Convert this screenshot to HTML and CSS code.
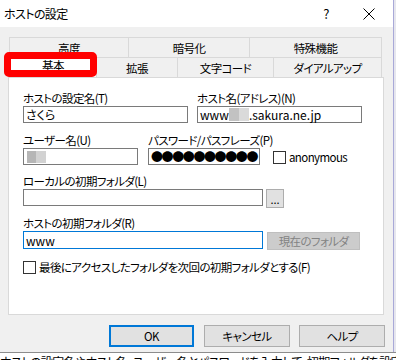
FILE: index.html
```html
<!DOCTYPE html>
<html lang="ja">
<head>
    <meta charset="UTF-8">
    <title>ホストの設定</title>
    <link rel="stylesheet" href="styles.css">
</head>
<body>
    <div class="screen">
        <div class="dialog">
            <div class="titlebar">
                <span class="title">ホストの設定</span>
                <span class="help">?</span>
                <svg class="close" width="12" height="12" viewBox="0 0 12 12">
                    <path d="M0.5 0.5 L11.5 11.5 M11.5 0.5 L0.5 11.5" stroke="#000" stroke-width="1" fill="none"/>
                </svg>
            </div>

            <div class="body">
                <div class="tabs">
                    <div class="tab-row">
                        <div class="tab t-kodo">高度</div>
                        <div class="tab t-ango">暗号化</div>
                        <div class="tab t-tokushu">特殊機能</div>
                    </div>
                    <div class="tab-row">
                        <div class="tab t-kihon selected">基本</div>
                        <div class="tab t-kakucho">拡張</div>
                        <div class="tab t-moji">文字コード</div>
                        <div class="tab t-dial">ダイアルアップ</div>
                    </div>
                </div>

                <div class="panel">
                    <div class="row">
                        <div class="field">
                            <div class="label">ホストの設定名(T)</div>
                            <div class="textbox w165">さくら</div>
                        </div>
                        <div class="field">
                            <div class="label">ホスト名(アドレス)(N)</div>
                            <div class="textbox w165">www<span class="blur b1"></span><span class="blur b2"></span>.sakura.ne.jp</div>
                        </div>
                    </div>

                    <div class="row row-user">
                        <div class="field w115">
                            <div class="label">ユーザー名(U)</div>
                            <div class="textbox w115"><span class="blur b3"></span><span class="blur b4"></span></div>
                        </div>
                        <div class="field pass w112">
                            <div class="label">パスワード/パスフレーズ(P)</div>
                            <div class="textbox w112 dots">●●●●●●●●●●</div>
                        </div>
                        <label class="check anon"><span class="box"></span>anonymous</label>
                    </div>

                    <div class="row row-local">
                        <div class="field">
                            <div class="label">ローカルの初期フォルダ(L)</div>
                            <div class="line">
                                <div class="textbox w240"></div>
                                <div class="button browse">...</div>
                            </div>
                        </div>
                    </div>

                    <div class="row">
                        <div class="field">
                            <div class="label">ホストの初期フォルダ(R)</div>
                            <div class="line">
                                <div class="textbox w240 focus">www</div>
                                <div class="button current">現在のフォルダ</div>
                            </div>
                        </div>
                    </div>

                    <label class="check last"><span class="box"></span>最後にアクセスしたフォルダを次回の初期フォルダとする(F)</label>
                </div>

                <div class="buttons">
                    <div class="button action ok">OK</div>
                    <div class="button action">キャンセル</div>
                    <div class="button action">ヘルプ</div>
                </div>
            </div>
        </div>
        <div class="side"></div>
    </div>
    <div class="under">ホストの設定名やホスト名、ユーザー名とパスワードを入力して、初期フォルダを設定します。</div>

    <div class="red-mark"></div>
</body>
</html>
```

FILE: styles.css
```css
body {
    margin: 0;
    width: 396px;
    height: 360px;
    overflow: hidden;
    background-color: #ffffff;
    font-family: "Noto Sans CJK JP", sans-serif;
    font-size: 11.5px;
    letter-spacing: -0.6px;
    font-feature-settings: "palt";
    color: #000;
    position: relative;
}
.screen {
    display: flex;
    height: 352px;
}
.dialog {
    width: 394px;
    height: 352px;
    box-sizing: border-box;
    background-color: #f0f0f0;
    border-right: 1px solid #a9a9d8;
}
.side {
    width: 2px;
    background-color: #e6e6ee;
}
.titlebar {
    height: 27px;
    background-color: #ffffff;
    display: flex;
    align-items: center;
}
.title {
    flex: 1;
    padding-left: 4px;
    line-height: 14px;
    font-size: 12px;
}
.help {
    width: 8px;
    text-align: center;
    margin-right: 33px;
    font-size: 13px;
}
.close {
    margin-right: 18px;
}
.body {
    padding: 10px 0 0 8px;
}
.tabs {
    margin-left: 1px;
}
.tab-row {
    display: flex;
}
.tab {
    height: 20px;
    line-height: 20px;
    box-sizing: border-box;
    text-align: center;
    border-top: 1px solid #d9d9d9;
    border-right: 1px solid #d9d9d9;
}
.tab:first-child {
    border-left: 1px solid #d9d9d9;
}
.tab.selected {
    background-color: #ffffff;
    line-height: 15px;
}
.t-kodo { width: 120px; }
.t-ango { width: 121px; }
.t-tokushu { width: 132px; }
.t-kihon { width: 88px; }
.t-kakucho { width: 81px; }
.t-moji { width: 96px; }
.t-dial { width: 108px; }

.panel {
    width: 376px;
    height: 238px;
    box-sizing: border-box;
    background-color: #ffffff;
    border: 1px solid #d9d9d9;
    padding: 13px 0 0 14px;
}
.row {
    display: flex;
    align-items: flex-end;
    gap: 9px;
    margin-bottom: 10px;
}
.row-user {
    margin-bottom: 9px;
}
.row-local {
    margin-bottom: 8px;
}
.label {
    height: 14px;
    line-height: 14px;
    margin-bottom: 1px;
    white-space: nowrap;
}
.textbox {
    height: 17px;
    box-sizing: border-box;
    border: 1px solid #7a7a7a;
    background-color: #ffffff;
    padding-left: 2px;
    line-height: 15px;
    font-size: 12px;
    letter-spacing: 0;
    display: flex;
    align-items: center;
    white-space: nowrap;
}
.w165 { width: 165px; }
.w115 { width: 115px; }
.w112 { width: 112px; }
.w240 { width: 240px; }
.textbox.focus {
    height: 18px;
    border-color: #0078d7;
}
.blur {
    display: inline-block;
    width: 10px;
    height: 13px;
}
.b1 { background-color: #c2c2c2; }
.b2 { background-color: #dadada; }
.b3 { background-color: #b6b6b6; width: 9px; height: 12px; margin-left: 1px; }
.b4 { background-color: #d2d2d2; width: 10px; height: 12px; }
.pass {
    margin-left: 1px;
}
.dots {
    font-size: 12px;
    letter-spacing: -1.4px;
    padding-left: 2px;
    overflow: hidden;
}
.check {
    display: flex;
    align-items: center;
    white-space: nowrap;
    height: 14px;
    line-height: 14px;
}
.box {
    width: 13px;
    height: 13px;
    box-sizing: border-box;
    border: 1px solid #333333;
    background-color: #ffffff;
    margin-right: 3px;
}
.anon {
    margin-left: 4px;
    height: 16px;
}
.last {
    margin-top: 3px;
}
.line {
    display: flex;
    align-items: flex-start;
}
.button {
    box-sizing: border-box;
    background-color: #e1e1e1;
    border: 1px solid #adadad;
    display: flex;
    align-items: center;
    justify-content: center;
    white-space: nowrap;
}
.browse {
    width: 18px;
    height: 19px;
    margin-left: 3px;
    font-size: 11px;
    letter-spacing: 0;
}
.current {
    width: 93px;
    height: 18px;
    margin-left: 4px;
    margin-top: 1px;
    background-color: #cccccc;
    border-color: #bfbfbf;
    color: #838383;
}
.buttons {
    display: flex;
    justify-content: flex-end;
    gap: 9px;
    margin-top: 10px;
    padding-right: 8px;
}
.action {
    width: 86px;
    height: 22px;
}
.ok {
    width: 85px;
    margin-right: 1px;
    border: 2px solid #0078d7;
}
.under {
    height: 7px;
    overflow: hidden;
    border-top: 1px solid #8c8c8c;
    padding-top: 2px;
    line-height: 14px;
    font-size: 12px;
    white-space: nowrap;
}
.red-mark {
    position: absolute;
    left: 4px;
    top: 52px;
    width: 93px;
    height: 25px;
    box-sizing: border-box;
    border: 7px solid #ff0000;
    border-radius: 5px;
}
```
